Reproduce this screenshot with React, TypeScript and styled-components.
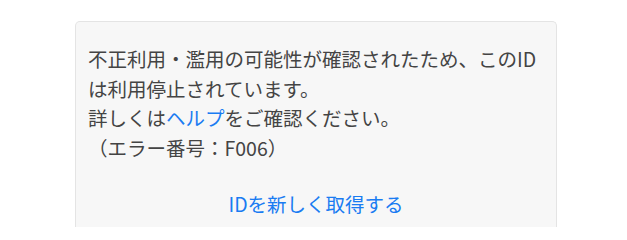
import React from 'react'
import styled, { createGlobalStyle } from 'styled-components'

const GlobalStyle = createGlobalStyle`
  html, body {
    margin: 0;
    padding: 0;
    background: #ffffff;
  }
  body {
    font-family: "Noto Sans CJK JP", "Noto Sans", sans-serif;
    color: #444444;
  }
`

const Page = styled.main`
  display: flex;
  justify-content: center;
  padding: 21px 70px 0 75px;
  height: 227px;
  box-sizing: border-box;
  overflow: hidden;
`

const Card = styled.section`
  width: 482px;
  box-sizing: border-box;
  background: #f7f7f7;
  border: 1px solid #e4e4e4;
  border-bottom: none;
  border-radius: 5px 5px 0 0;
  padding: 22px 12px 40px 12px;
  display: flex;
  flex-direction: column;
`

const Message = styled.p`
  margin: 0;
  font-size: 19.5px;
  line-height: 29.5px;
  color: #444444;
`

const Link = styled.a`
  color: #1a7cf2;
  text-decoration: none;
`

const Action = styled.a`
  align-self: center;
  margin-top: 27px;
  font-size: 19.5px;
  line-height: 29.5px;
  color: #1a7cf2;
  text-decoration: none;
`

export default function App() {
  return (
    <>
      <GlobalStyle />
      <Page>
        <Card>
          <Message>
            不正利用・濫用の可能性が確認されたため、このIDは利用停止されています。
            <br />
            詳しくは<Link href="#">ヘルプ</Link>をご確認ください。
            <br />
            （エラー番号：F006）
          </Message>
          <Action href="#">IDを新しく取得する</Action>
        </Card>
      </Page>
    </>
  )
}
